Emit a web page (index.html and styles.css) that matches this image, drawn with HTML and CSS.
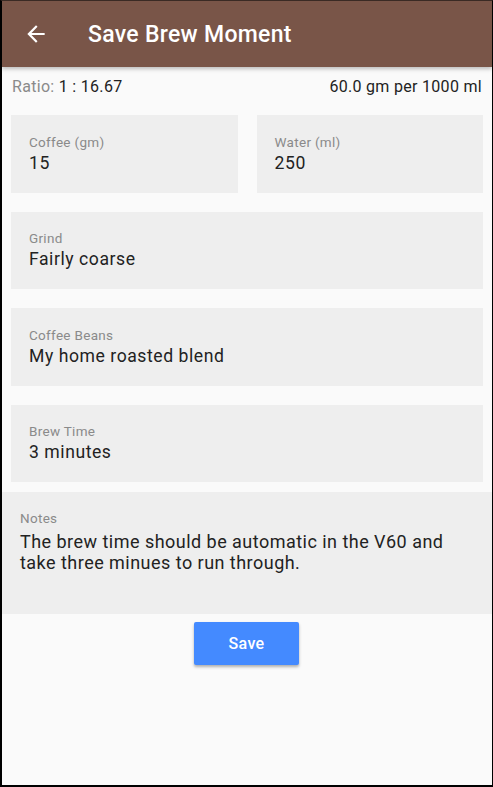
FILE: index.html
```html
<!DOCTYPE html>
<html>
<head>
<meta charset="utf-8">
<link rel="stylesheet" href="styles.css">
</head>
<body>
<div class="frame">
  <header class="appbar">
    <svg class="back" width="24" height="24" viewBox="0 0 24 24"><path d="M20 11H7.83l5.59-5.59L12 4l-8 8 8 8 1.41-1.41L7.83 13H20v-2z" fill="#fff"/></svg>
    <h1 class="title">Save Brew Moment</h1>
  </header>
  <div class="ratio">
    <span><span class="muted">Ratio:</span> 1 : 16.67</span>
    <span>60.0 gm per 1000 ml</span>
  </div>
  <div class="fields">
    <div class="row">
      <div class="field"><div class="label">Coffee (gm)</div><div class="value">15</div></div>
      <div class="field"><div class="label">Water (ml)</div><div class="value">250</div></div>
    </div>
    <div class="field"><div class="label">Grind</div><div class="value">Fairly coarse</div></div>
    <div class="field"><div class="label">Coffee Beans</div><div class="value">My home roasted blend</div></div>
    <div class="field"><div class="label">Brew Time</div><div class="value">3 minutes</div></div>
  </div>
  <div class="notes">
    <div class="label">Notes</div>
    <div class="notes-text">The brew time should be automatic in the V60 and take three minues to run through.</div>
  </div>
  <div class="actions">
    <button class="save">Save</button>
  </div>
</div>
</body>
</html>
```
FILE: styles.css
```css
html, body {
  margin: 0;
  padding: 0;
  background: #000;
}
.frame {
  box-sizing: border-box;
  width: 493px;
  height: 787px;
  border-left: 2px solid #000;
  border-right: 1px solid #000;
  border-bottom: 2px solid #000;
  border-top: 1px solid #3a2a24;
  background: #fafafa;
  font-family: Roboto, "Liberation Sans", sans-serif;
  color: #212121;
  overflow: hidden;
}
.appbar {
  height: 66px;
  background: #795548;
  display: flex;
  align-items: center;
  box-shadow: 0 2px 4px rgba(0,0,0,0.25);
  position: relative;
}
.back {
  margin-left: 21px;
  width: 26px;
  height: 26px;
}
.title {
  margin: 0 0 0 39px;
  color: #fff;
  font-size: 23px;
  font-weight: 500;
  letter-spacing: 0.3px;
}
.ratio {
  display: flex;
  justify-content: space-between;
  padding: 10px 10px 0 10px;
  font-size: 16px;
  line-height: 20px;
  letter-spacing: 0.3px;
  color: #222;
}
.muted { color: #8a8a8a; }
.fields {
  display: flex;
  flex-direction: column;
  gap: 19px;
  padding: 18px 9px 0 9px;
}
.row {
  display: grid;
  grid-template-columns: 1fr 1fr;
  gap: 19px;
}
.field {
  background: #eeeeee;
  height: 77.5px;
  box-sizing: border-box;
  padding: 18.5px 18px 0 18px;
}
.label {
  font-size: 13.5px;
  line-height: 16px;
  letter-spacing: 0.3px;
  color: #8a8a8a;
}
.value {
  font-size: 17.6px;
  line-height: 24px;
  letter-spacing: 0.55px;
  margin-top: 1px;
  color: #222;
}
.notes {
  margin-top: 9.5px;
  background: #eeeeee;
  height: 122px;
  box-sizing: border-box;
  padding: 18px 34px 0 18px;
}
.notes-text {
  font-size: 18px;
  line-height: 21.5px;
  letter-spacing: 0.47px;
  margin-top: 5px;
  color: #222;
}
.actions {
  display: flex;
  justify-content: center;
  padding-top: 8px;
}
.save {
  width: 105px;
  height: 43px;
  border: none;
  border-radius: 2px;
  background: #448aff;
  color: #fff;
  font-family: Roboto, "Liberation Sans", sans-serif;
  font-size: 16px;
  font-weight: 500;
  letter-spacing: 0.3px;
  box-shadow: 0 2px 3px rgba(0,0,0,0.3);
  margin-right: 1px;
}
```
